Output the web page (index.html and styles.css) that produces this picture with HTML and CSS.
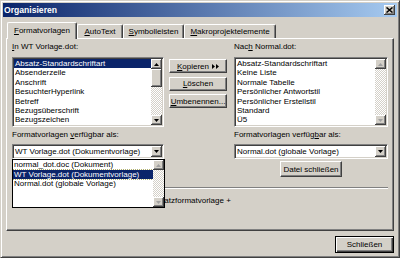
FILE: index.html
```html
<!DOCTYPE html>
<html lang="de">
<head>
    <meta charset="UTF-8">
    <title>Organisieren</title>
    <link rel="stylesheet" href="styles.css">
</head>
<body>
<div class="window">
    <div class="titlebar">
        <span class="title">Organisieren</span>
        <button class="close-btn" aria-label="Schließen">
            <svg width="7" height="6" viewBox="0 0 7 6"><path d="M0.5 0.5 L6.5 5.5 M6.5 0.5 L0.5 5.5" stroke="#000" stroke-width="1.5"/></svg>
        </button>
    </div>

    <div class="tabs">
        <div class="tab active tab-styles"><span><u>F</u>ormatvorlagen</span></div>
        <div class="tab tab-autotext"><span><u>A</u>utoText</span></div>
        <div class="tab tab-toolbars"><span><u>S</u>ymbolleisten</span></div>
        <div class="tab tab-macros"><span><u>M</u>akroprojektelemente</span></div>
    </div>

    <div class="panel">
        <div class="columns">
            <!-- source document -->
            <div class="col">
                <div class="label"><u>I</u>n WT Vorlage.dot:</div>
                <div class="listbox">
                    <ul class="items">
                        <li class="selected">Absatz-Standardschriftart</li>
                        <li>Absenderzeile</li>
                        <li>Anschrift</li>
                        <li>BesuchterHyperlink</li>
                        <li>Betreff</li>
                        <li>Bezugsüberschrift</li>
                        <li>Bezugszeichen</li>
                    </ul>
                    <div class="scrollbar">
                        <div class="sb-btn"><svg class="arrow" width="5" height="3" viewBox="0 0 5 3"><polygon points="0,3 2.5,0 5,3"/></svg></div>
                        <div class="sb-thumb"></div>
                        <div class="sb-track"></div>
                        <div class="sb-btn"><svg class="arrow" width="5" height="3" viewBox="0 0 5 3"><polygon points="0,0 2.5,3 5,0"/></svg></div>
                    </div>
                </div>
                <div class="label label-gap">Formatvorlagen <u>v</u>erfügbar als:</div>
                <div class="combo">
                    <div class="combo-text">WT Vorlage.dot (Dokumentvorlage)</div>
                    <div class="combo-btn"><svg class="arrow" width="5" height="3" viewBox="0 0 5 3"><polygon points="0,0 2.5,3 5,0"/></svg></div>
                </div>
            </div>

            <!-- actions -->
            <div class="actions">
                <button class="btn"><span><u>K</u>opieren</span>
                    <svg width="7" height="5" viewBox="0 0 7 5"><polygon points="0,0 3,2.5 0,5"/><polygon points="4,0 7,2.5 4,5"/></svg>
                </button>
                <button class="btn"><span><u>L</u>öschen</span></button>
                <button class="btn"><span><u>U</u>mbenennen...</span></button>
            </div>

            <!-- target document -->
            <div class="col">
                <div class="label">Nac<u>h</u> Normal.dot:</div>
                <div class="listbox">
                    <ul class="items">
                        <li>Absatz-Standardschriftart</li>
                        <li>Keine Liste</li>
                        <li>Normale Tabelle</li>
                        <li>Persönlicher Antwortstil</li>
                        <li>Persönlicher Erstellstil</li>
                        <li>Standard</li>
                        <li>Ü5</li>
                    </ul>
                    <div class="scrollbar disabled">
                        <div class="sb-btn"><svg class="arrow" width="5" height="3" viewBox="0 0 5 3"><polygon points="0,3 2.5,0 5,3"/></svg></div>
                        <div class="sb-track"></div>
                        <div class="sb-btn"><svg class="arrow" width="5" height="3" viewBox="0 0 5 3"><polygon points="0,0 2.5,3 5,0"/></svg></div>
                    </div>
                </div>
                <div class="label label-gap">Formatvorlagen verfüg<u>b</u>ar als:</div>
                <div class="combo">
                    <div class="combo-text">Normal.dot (globale Vorlage)</div>
                    <div class="combo-btn"><svg class="arrow" width="5" height="3" viewBox="0 0 5 3"><polygon points="0,0 2.5,3 5,0"/></svg></div>
                </div>
                <button class="btn close-file">Datei schließen</button>
            </div>
        </div>

        <div class="separator"></div>
        <div class="description">Schriftart: Tahoma, 8 pt, Fett, Deutsch, Absatzformatvorlage +</div>

        <!-- opened dropdown of the left combo -->
        <div class="droplist">
            <ul class="items">
                <li>normal_dot.doc (Dokument)</li>
                <li class="selected focused">WT Vorlage.dot (Dokumentvorlage)</li>
                <li>Normal.dot (globale Vorlage)</li>
            </ul>
            <div class="scrollbar disabled">
                <div class="sb-btn"><svg class="arrow" width="5" height="3" viewBox="0 0 5 3"><polygon points="0,3 2.5,0 5,3"/></svg></div>
                <div class="sb-track"></div>
                <div class="sb-btn"><svg class="arrow" width="5" height="3" viewBox="0 0 5 3"><polygon points="0,0 2.5,3 5,0"/></svg></div>
            </div>
        </div>
    </div>

    <div class="footer">
        <button class="btn btn-default">Schließen</button>
    </div>
</div>
</body>
</html>
```

FILE: styles.css
```css
body {
    margin: 0;
    font-family: "Liberation Sans", Arial, sans-serif;
    font-size: 8px;
    color: #000;
    background: #d4d0c8;
}

u {
    text-underline-offset: 1px;
}

.window {
    width: 400px;
    height: 258px;
    box-sizing: border-box;
    display: flex;
    flex-direction: column;
    padding: 2px;
    border: 1px solid;
    border-color: #d4d0c8 #404040 #404040 #d4d0c8;
    box-shadow: inset 1px 1px #fff, inset -1px -1px #808080;
    background: #d4d0c8;
}

/* title bar */
.titlebar {
    height: 14px;
    flex: none;
    display: flex;
    align-items: center;
    justify-content: space-between;
    padding: 0 2px 0 1px;
    background: linear-gradient(to right, #0a246a, #a6caf0);
}

.title {
    color: #fff;
    font-weight: bold;
    font-size: 8.6px;
}

.close-btn {
    width: 11px;
    height: 10px;
    padding: 0;
    border: none;
    display: flex;
    align-items: center;
    justify-content: center;
    background: #d4d0c8;
    box-shadow: inset -1px -1px #404040, inset 1px 1px #fff, inset -2px -2px #808080;
}

/* tabs */
.tabs {
    flex: none;
    display: flex;
    align-items: flex-end;
    height: 16px;
    margin-top: 5px;
    padding-left: 4px;
    position: relative;
    z-index: 1;
}

.tab {
    height: 14px;
    box-sizing: border-box;
    display: flex;
    align-items: center;
    justify-content: center;
    border: 1px solid #fff;
    border-right-color: #404040;
    border-bottom: none;
    border-radius: 2px 2px 0 0;
    box-shadow: inset -1px 0 #808080;
    white-space: nowrap;
    background: #d4d0c8;
}

.tab.active {
    height: 17px;
    margin-bottom: -1px;
    padding-bottom: 2px;
}

.tab-styles { width: 70px; }
.tab-autotext { width: 46px; }
.tab-toolbars { width: 61px; }
.tab-macros { width: 92px; }

/* tab page */
.panel {
    flex: none;
    height: 193px;
    box-sizing: border-box;
    margin: 0 3px;
    padding: 3px 5px 0;
    border: 1px solid;
    border-color: #fff #404040 #404040 #fff;
    box-shadow: inset -1px -1px #808080;
    position: relative;
}

.columns {
    display: grid;
    grid-template-columns: 152px 1fr 154px;
    column-gap: 5px;
}

.col {
    display: flex;
    flex-direction: column;
}

.label {
    height: 10px;
    line-height: 10px;
    white-space: nowrap;
}

.label-gap {
    margin-top: 3px;
}

.listbox {
    margin-top: 5px;
    height: 70px;
    box-sizing: border-box;
    display: flex;
    padding: 1px;
    background: #fff;
    border: 1px solid;
    border-color: #808080 #fff #fff #808080;
    box-shadow: inset 1px 1px #404040, inset -1px -1px #d4d0c8;
}

.items {
    flex: 1;
    min-width: 0;
    list-style: none;
    margin: 0;
    padding: 0;
    overflow: hidden;
}

.items li {
    height: 9.4px;
    line-height: 9.4px;
    padding-left: 1px;
    white-space: nowrap;
}

.items .selected {
    background: #0a246a;
    color: #fff;
}

.items .focused {
    outline: 1px dotted #b0b070;
    outline-offset: 0;
}

/* scrollbars */
.scrollbar {
    width: 11px;
    flex: none;
    display: flex;
    flex-direction: column;
    background-color: #fff;
    background-image: repeating-conic-gradient(#d4d0c8 0 25%, #fff 0 50%);
    background-size: 2px 2px;
}

.sb-btn,
.sb-thumb {
    flex: none;
    background: #d4d0c8;
    box-shadow: inset -1px -1px #404040, inset 1px 1px #fff, inset -2px -2px #808080;
}

.sb-btn {
    height: 10px;
    display: flex;
    align-items: center;
    justify-content: center;
}

.sb-thumb {
    height: 18px;
}

.sb-track {
    flex: 1;
}

.arrow {
    fill: #000;
}

.scrollbar.disabled .arrow {
    fill: #a0a0a0;
}

/* combo boxes */
.combo {
    margin-top: 4px;
    height: 15px;
    box-sizing: border-box;
    display: flex;
    padding: 1px;
    background: #fff;
    border: 1px solid;
    border-color: #808080 #fff #fff #808080;
    box-shadow: inset 1px 1px #404040, inset -1px -1px #d4d0c8;
}

.combo-text {
    flex: 1;
    line-height: 11px;
    padding-left: 1px;
    white-space: nowrap;
    overflow: hidden;
}

.combo-btn {
    width: 11px;
    display: flex;
    align-items: center;
    justify-content: center;
    background: #d4d0c8;
    box-shadow: inset -1px -1px #404040, inset 1px 1px #fff, inset -2px -2px #808080;
}

/* buttons */
.actions {
    display: flex;
    flex-direction: column;
    align-items: flex-start;
    gap: 3.5px;
    padding-top: 17px;
}

.btn {
    font: inherit;
    color: #000;
    width: 58px;
    height: 14px;
    padding: 0;
    display: flex;
    align-items: center;
    justify-content: center;
    gap: 3px;
    white-space: nowrap;
    background: #d4d0c8;
    border: 1px solid;
    border-color: #fff #404040 #404040 #fff;
    box-shadow: inset -1px -1px #808080;
}

.close-file {
    width: 62px;
    height: 16px;
    margin-top: 2px;
    align-self: center;
}

.separator {
    margin-top: 10px;
    border-top: 1px solid #808080;
    border-bottom: 1px solid #fff;
}

.description {
    margin-top: 7px;
    line-height: 10px;
    white-space: nowrap;
    overflow: hidden;
}

/* the opened list of the left combo box lies over the page */
.droplist {
    position: absolute;
    left: 5px;
    top: 120px;
    width: 153px;
    height: 49px;
    box-sizing: border-box;
    display: flex;
    background: #fff;
    border: 1px solid #000;
}

.droplist .items li {
    height: 9.6px;
    line-height: 9.6px;
}

.footer {
    display: flex;
    justify-content: flex-end;
    padding: 5px 3px 0 0;
}

.btn-default {
    width: 59px;
    height: 17px;
    border: 1px solid #000;
    box-shadow: inset 1px 1px #fff, inset -1px -1px #404040, inset -2px -2px #808080;
}
```
